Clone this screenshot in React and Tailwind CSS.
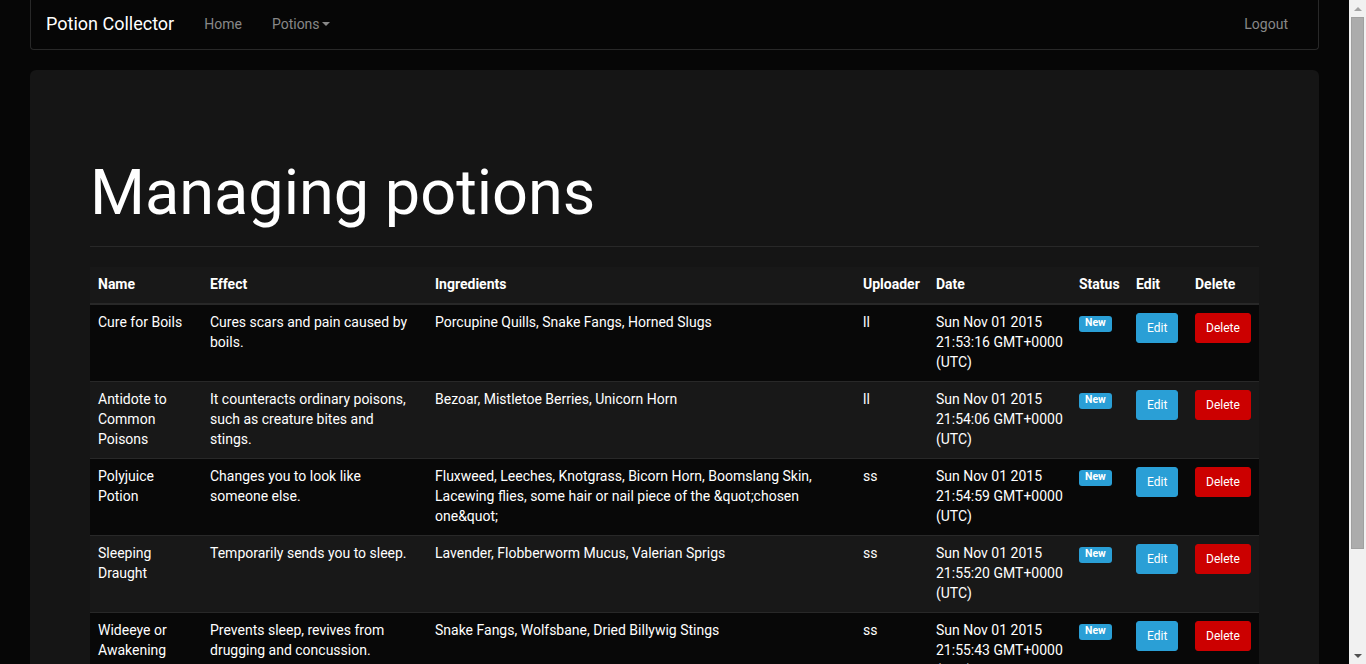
import React from 'react';

const potions = [
  {
    name: 'Cure for Boils',
    effect: 'Cures scars and pain caused by boils.',
    ingredients: 'Porcupine Quills, Snake Fangs, Horned Slugs',
    uploader: 'll',
    date: 'Sun Nov 01 2015 21:53:16 GMT+0000 (UTC)',
  },
  {
    name: 'Antidote to Common Poisons',
    effect: 'It counteracts ordinary poisons, such as creature bites and stings.',
    ingredients: 'Bezoar, Mistletoe Berries, Unicorn Horn',
    uploader: 'll',
    date: 'Sun Nov 01 2015 21:54:06 GMT+0000 (UTC)',
  },
  {
    name: 'Polyjuice Potion',
    effect: 'Changes you to look like someone else.',
    ingredients:
      'Fluxweed, Leeches, Knotgrass, Bicorn Horn, Boomslang Skin, Lacewing flies, some hair or nail piece of the &quot;chosen one&quot;',
    uploader: 'ss',
    date: 'Sun Nov 01 2015 21:54:59 GMT+0000 (UTC)',
  },
  {
    name: 'Sleeping Draught',
    effect: 'Temporarily sends you to sleep.',
    ingredients: 'Lavender, Flobberworm Mucus, Valerian Sprigs',
    uploader: 'ss',
    date: 'Sun Nov 01 2015 21:55:20 GMT+0000 (UTC)',
  },
  {
    name: 'Wideeye or Awakening',
    effect: 'Prevents sleep, revives from drugging and concussion.',
    ingredients: 'Snake Fangs, Wolfsbane, Dried Billywig Stings',
    uploader: 'ss',
    date: 'Sun Nov 01 2015 21:55:43 GMT+0000 (UTC)',
  },
];

const columns = [
  { label: 'Name', width: 'w-[112px]' },
  { label: 'Effect', width: 'w-[225px]' },
  { label: 'Ingredients', width: 'w-[428px]' },
  { label: 'Uploader', width: 'w-[73px]' },
  { label: 'Date', width: 'w-[143px]' },
  { label: 'Status', width: 'w-[57px]' },
  { label: 'Edit', width: 'w-[59px]' },
  { label: 'Delete', width: 'w-[72px]' },
];

const cell = 'px-2 pt-[7px] pb-[9px] align-top border-t border-[#282828]';

const Scrollbar = () => (
  <div className="w-[17px] shrink-0 h-full bg-[#f1f1f1] flex flex-col">
    <div className="h-[17px] flex items-center justify-center">
      <div className="w-0 h-0 border-b-4 border-x-4 border-x-transparent border-b-[#a3a3a3]"></div>
    </div>
    <div className="h-[532px] mx-[2px] bg-[#acacac] border border-[#a0a0a0]"></div>
    <div className="flex-1"></div>
    <div className="h-[17px] flex items-center justify-center">
      <div className="w-0 h-0 border-t-4 border-x-4 border-x-transparent border-t-[#505050]"></div>
    </div>
  </div>
);

const App = () => {
  return (
    <div className="h-screen w-full flex overflow-hidden bg-[#060606] font-['Roboto','Liberation_Sans',sans-serif] text-sm leading-5 text-[#888]">
      <div className="flex-1 h-full overflow-hidden px-[30px]">
        {/* Navbar */}
        <nav className="h-[50px] border-x border-b border-[#282828] rounded-b bg-[#060606] flex items-stretch justify-between">
          <div className="flex items-stretch">
            <span className="px-[15px] pt-[14px] pb-4 text-[18px] leading-5 text-white">Potion Collector</span>
            <span className="px-[15px] pt-[14px] pb-4 text-[#888]">Home</span>
            <span className="px-[15px] pt-[14px] pb-4 text-[#888] flex items-center">
              Potions
              <span className="inline-block w-0 h-0 ml-0.5 border-t-4 border-x-4 border-x-transparent border-t-[#888]"></span>
            </span>
          </div>
          <div className="flex items-stretch pr-[15px]">
            <span className="px-[15px] pt-[14px] pb-4 text-[#888]">Logout</span>
          </div>
        </nav>

        {/* Jumbotron */}
        <div className="mt-5 bg-[#151515] rounded-md px-[60px] pt-[88px] pb-12">
          <div className="pb-[19px] border-b border-[#282828]">
            <h1 className="text-[63px] leading-[1.1] text-white font-normal">Managing potions</h1>
          </div>

          <table className="mt-5 w-full table-fixed border-collapse bg-[#181818] text-white">
            <thead>
              <tr>
                {columns.map((c) => (
                  <th
                    key={c.label}
                    className={`${c.width} px-2 pt-[7px] pb-[9px] text-left font-bold align-bottom border-b-2 border-[#282828]`}
                  >
                    {c.label}
                  </th>
                ))}
              </tr>
            </thead>
            <tbody>
              {potions.map((p, i) => (
                <tr key={p.name} className={i % 2 === 0 ? 'bg-[#080808]' : 'bg-[#181818]'}>
                  <td className={cell}>{p.name}</td>
                  <td className={`${cell} pr-3`}>{p.effect}</td>
                  <td className={cell}>{p.ingredients}</td>
                  <td className={cell}>{p.uploader}</td>
                  <td className={cell}>{p.date}</td>
                  <td className="p-2 align-top border-t border-[#282828]">
                    <span className="inline-block bg-[#2a9fd6] text-white text-[10.5px] font-bold leading-none px-[6px] pt-[2px] pb-[3px] rounded-[3px] align-[2px]">
                      New
                    </span>
                  </td>
                  <td className="p-2 align-top border-t border-[#282828]">
                    <button className="bg-[#2a9fd6] border border-[#2a9fd6] text-white text-xs leading-[18px] px-[10px] py-[5px] rounded-[3px]">
                      Edit
                    </button>
                  </td>
                  <td className="p-2 align-top border-t border-[#282828]">
                    <button className="bg-[#cc0000] border border-[#cc0000] text-white text-xs leading-[18px] px-[10px] py-[5px] rounded-[3px]">
                      Delete
                    </button>
                  </td>
                </tr>
              ))}
            </tbody>
          </table>
        </div>
      </div>
      <Scrollbar />
    </div>
  );
};

export default App;
